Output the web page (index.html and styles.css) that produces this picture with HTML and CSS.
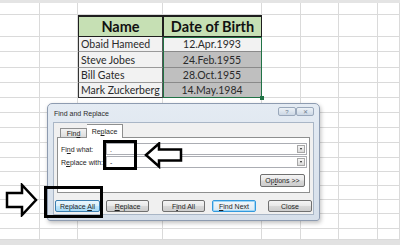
FILE: index.html
```html
<!DOCTYPE html>
<html lang="en">
<head>
<meta charset="UTF-8">
<meta name="viewport" content="width=device-width, initial-scale=1.0">
<title>Find and Replace</title>
<link rel="stylesheet" href="styles.css">
</head>
<body>

<div class="topbar"></div>

<div class="sheet" id="sheet">
    <div class="cell head col-name row-head">Name</div>
    <div class="cell head col-date row-head">Date of Birth</div>
    <div class="cell name col-name r1">Obaid Hameed</div>
    <div class="cell date col-date r1 light">12.Apr.1993</div>
    <div class="cell name col-name r2">Steve Jobes</div>
    <div class="cell date col-date r2">24.Feb.1955</div>
    <div class="cell name col-name r3">Bill Gates</div>
    <div class="cell date col-date r3">28.Oct.1955</div>
    <div class="cell name col-name r4 last">Mark Zuckerberg</div>
    <div class="cell date col-date r4 last">14.May.1984</div>
    <div class="selection"></div>
</div>

<div class="bottombar"></div>

<!-- Find and Replace dialog -->
<div class="dialog">
    <div class="titlebar">
        <span class="title">Find and Replace</span>
        <div class="tbtns">
            <span class="tbtn">?</span>
            <span class="tbtn">&#x2715;</span>
        </div>
    </div>
    <div class="client">
        <div class="tabs">
            <span class="tab"><span>Fin<u>d</u></span></span>
            <span class="tab active"><span>Re<u>p</u>lace</span></span>
        </div>
        <div class="panel">
            <div class="field first">
                <label>Fi<u>n</u>d what:</label>
                <div class="input"><span class="value">.</span><span class="drop"></span></div>
            </div>
            <div class="field">
                <label>R<u>e</u>place with:</label>
                <div class="input"><span class="value">-</span><span class="drop"></span></div>
            </div>
            <div class="options">
                <button class="btn btn-options"><span>Op<u>t</u>ions &gt;&gt;</span></button>
            </div>
        </div>
        <div class="buttons">
            <button class="btn btn-all"><span>Replace <u>A</u>ll</span></button>
            <button class="btn btn-replace"><span><u>R</u>eplace</span></button>
            <button class="btn btn-findall"><span>F<u>i</u>nd All</span></button>
            <button class="btn btn-next"><span><u>F</u>ind Next</span></button>
            <button class="btn btn-close"><span>Close</span></button>
        </div>
    </div>
</div>

<!-- Annotations drawn over the screenshot -->
<div class="mark mark-find"></div>
<div class="mark mark-all"></div>
<svg class="arrow arrow-left" width="40" height="27" viewBox="0 0 40 27">
    <path d="M2 13 L15 1.5 V7.5 H37 V18.5 H15 V24.5 Z" fill="#fff" stroke="#000" stroke-width="2.5"/>
</svg>
<svg class="arrow arrow-right" width="34" height="34" viewBox="0 0 34 34">
    <path d="M2 10 H17 V2 L31 17 L17 32 V24 H2 Z" fill="#fff" stroke="#000" stroke-width="2.5"/>
</svg>

<script>
    // Fill the rest of the sheet with empty cells
    const sheet = document.getElementById('sheet');
    const totalCells = 8 * 16;
    for (let i = 0; i < totalCells - 10; i++) {
        const cell = document.createElement('div');
        cell.className = 'cell';
        sheet.appendChild(cell);
    }
</script>

</body>
</html>
```

FILE: styles.css
```css
/* Page */
body {
    margin: 0;
    width: 400px;
    height: 245px;
    overflow: hidden;
    background-color: #FFFFFF;
    font-family: 'Lato', sans-serif;
    position: relative;
}
.topbar {
    height: 3px;
    background-color: #E4E4E4;
}
.bottombar {
    height: 5px;
    background-color: #E2E2E2;
}

/* Spreadsheet grid */
.sheet {
    display: grid;
    grid-template-columns: 40px 38px 85px 99px 39px 38px 39px 22px;
    grid-template-rows: 12px 22px 15px 16px 15px 15px 15px 15px 15px 15px 14px 14px 14px 14px 15px 11px;
    position: relative;
}
.cell {
    box-sizing: border-box;
    border-right: 1px solid #DADADA;
    border-bottom: 1px solid #DADADA;
    white-space: nowrap;
}
.col-name { grid-column: 3; }
.col-date { grid-column: 4; }
.row-head { grid-row: 2; }
.r1 { grid-row: 3; }
.r2 { grid-row: 4; }
.r3 { grid-row: 5; }
.r4 { grid-row: 6; }

.cell.head {
    background-color: #C6E0B4; /* Excel green header */
    border: 1px solid #1E1E1E;
    border-top-width: 2px;
    font-weight: 700;
    font-size: 14.5px;
    color: #111;
    display: flex;
    align-items: center;
    justify-content: center;
}
.cell.name {
    background-color: #F2F2F2;
    border-left: 1px solid #333;
    border-right: 1px solid #555;
    border-bottom: 1px solid #9A9A9A;
    font-size: 10.5px;
    color: #2A2A2A;
    display: flex;
    align-items: center;
    padding-left: 2px;
}
.cell.date {
    background-color: #BFBFBF;
    border-right: 1px solid #555;
    border-bottom: 1px solid #8A8A8A;
    font-size: 10.5px;
    color: #2A2A2A;
    display: flex;
    align-items: center;
    justify-content: center;
}
.cell.date.light {
    background-color: #F2F2F2;
}
.cell.last {
    border-bottom: 1px solid #333;
}
.selection {
    grid-column: 4;
    grid-row: 3 / 7;
    border: 1px solid #217346;
    position: relative;
    pointer-events: none;
}
.selection::after {
    content: '';
    position: absolute;
    right: -3px;
    bottom: -3px;
    width: 4px;
    height: 4px;
    background-color: #217346;
}

/* Dialog */
.dialog {
    position: absolute;
    left: 47px;
    top: 103px;
    width: 273px;
    height: 118px;
    box-sizing: border-box;
    background: linear-gradient(#E4EBF3, #D6DFEA);
    border: 1px solid #8D9BB0;
    border-radius: 5px 5px 3px 3px;
    padding: 0 5px 5px;
    display: flex;
    flex-direction: column;
    font: 7px 'Liberation Sans', sans-serif;
    color: #1E1E1E;
    white-space: nowrap;
    box-shadow: 1px 2px 4px rgba(0, 0, 0, 0.25);
}
.titlebar {
    height: 18px;
    display: flex;
    align-items: center;
    justify-content: space-between;
    padding-left: 1px;
}
.title {
    color: #2B2B2B;
    margin-top: 1px;
}
.tbtns {
    display: flex;
    margin-top: -3px;
}
.tbtn {
    width: 18px;
    height: 9px;
    box-sizing: border-box;
    border: 1px solid #9AA8BB;
    border-radius: 2px;
    background: linear-gradient(#EDF2F7, #CCD7E4);
    font-size: 6px;
    color: #6E7D90;
    display: flex;
    align-items: center;
    justify-content: center;
}
.client {
    flex: 1;
    background-color: #F0F0F0;
    border: 1px solid #A9B6C6;
    display: flex;
    flex-direction: column;
}
.tabs {
    display: flex;
    align-items: flex-end;
    height: 13px;
    margin: 1px 0 0 6px;
    position: relative;
    z-index: 1;
}
.tab {
    width: 27px;
    height: 9px;
    box-sizing: border-box;
    border: 1px solid #8E8F8F;
    border-bottom: none;
    background: linear-gradient(#F2F2F2, #DCDCDC);
    display: flex;
    align-items: center;
    justify-content: center;
}
.tab.active {
    width: 36px;
    height: 14px;
    margin-bottom: -1px;
    background: #FFFFFF;
    border-left: none;
}
.panel {
    margin-left: 3px;
    width: 253px;
    height: 56px;
    box-sizing: border-box;
    background-color: #FFFFFF;
    border: 1px solid #8E8F8F;
    display: flex;
    flex-direction: column;
}
.field {
    display: flex;
    align-items: center;
    height: 12px;
    margin-top: 1px;
}
.field.first {
    margin-top: 5px;
}
.field label {
    width: 45px;
    padding-left: 3px;
}
.input {
    width: 201px;
    height: 12px;
    box-sizing: border-box;
    border: 1px solid #ABADB3;
    background-color: #FFFFFF;
    display: flex;
    align-items: center;
    padding-left: 3px;
}
.drop {
    margin-left: auto;
    margin-right: 1px;
    width: 8px;
    height: 8px;
    box-sizing: border-box;
    border: 1px solid #A8A8A8;
    background: linear-gradient(#F6F6F6, #DADADA);
    position: relative;
}
.drop::after {
    content: '';
    position: absolute;
    left: 1.5px;
    top: 2px;
    border-left: 1.5px solid transparent;
    border-right: 1.5px solid transparent;
    border-top: 2px solid #222;
}
.options {
    display: flex;
    justify-content: flex-end;
    margin: 6px 4px 0 0;
}

/* Buttons */
.btn {
    height: 12px;
    box-sizing: border-box;
    padding: 0;
    border: 1px solid #707070;
    border-radius: 2px;
    background: linear-gradient(#F4F4F4 0%, #E8E8E8 48%, #D8D8D8 52%, #CDCDCD 100%);
    font: 7px 'Liberation Sans', sans-serif;
    color: #1E1E1E;
    white-space: nowrap;
    display: flex;
    align-items: center;
    justify-content: center;
}
.btn-options {
    width: 45px;
    height: 13px;
}
.buttons {
    display: flex;
    margin: 7px 0 0 1px;
}
.btn-all {
    width: 45px;
    border-color: #3C7FB1;
    background: linear-gradient(#EAF6FD 0%, #D9F0FC 48%, #BEE6FD 52%, #A7D9F5 100%);
}
.btn-replace { width: 43px; margin-left: 6px; }
.btn-findall { width: 43px; margin-left: 13px; }
.btn-next {
    width: 44px;
    margin-left: 7px;
    border-color: #3399DD;
    box-shadow: inset 0 0 0 1px #9FD6F5;
    background: linear-gradient(#F2F8FC, #DCE9F2);
}
.btn-close { width: 44px; margin-left: 12px; }

/* Annotations */
.mark {
    position: absolute;
    box-sizing: border-box;
    border: 3px solid #000000;
}
.mark-find {
    left: 103px;
    top: 140px;
    width: 34px;
    height: 30px;
}
.mark-all {
    left: 44px;
    top: 186px;
    width: 59px;
    height: 32px;
}
.arrow {
    position: absolute;
}
.arrow-left {
    left: 144px;
    top: 142px;
}
.arrow-right {
    left: 5px;
    top: 183px;
}
```
